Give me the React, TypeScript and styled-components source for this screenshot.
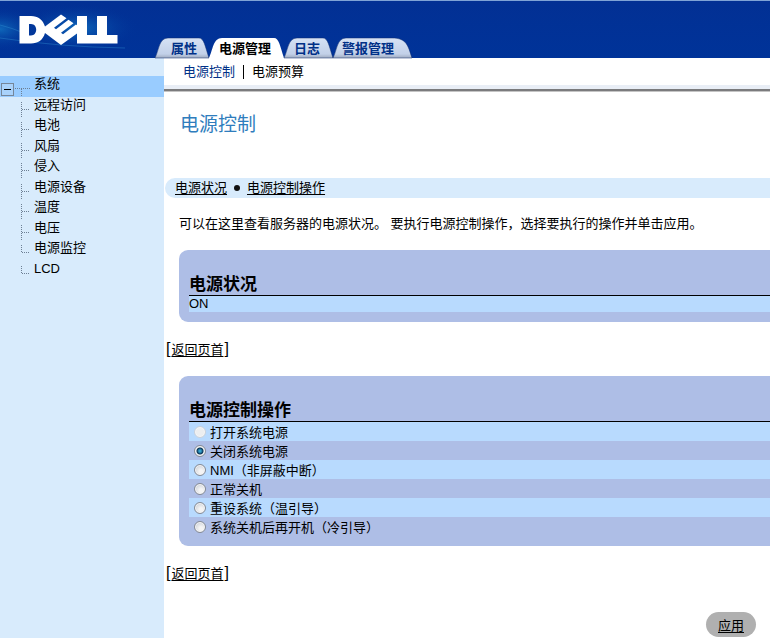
import React from "react";
import styled, { createGlobalStyle } from "styled-components";

const Global = createGlobalStyle`
  * { box-sizing: border-box; }
  body {
    margin: 0;
    background: #fff;
    color: #000;
    font: 13px/20px "Liberation Sans", "Noto Sans CJK SC", sans-serif;
  }
  a { color: inherit; }
`;

const Header = styled.header`
  display: flex;
  height: 58px;
  border-top: 1px solid #7fa3d6;
  background: linear-gradient(#023094, #003399);
`;
const Brand = styled.div`
  flex: none;
  width: 155px;
`;
const Tabs = styled.nav`
  display: flex;
  align-items: flex-end;
`;
const Tab = styled.a<{ $active?: boolean; $width: number; $left: number }>`
  position: relative;
  width: ${(p) => p.$width}px;
  height: 20px;
  padding-left: ${(p) => p.$left}px;
  color: ${(p) => (p.$active ? "#000" : "#003087")};
  font-weight: bold;
  line-height: 22px;
  white-space: nowrap;
  text-decoration: none;
`;
const TabShape = styled.svg`
  position: absolute;
  left: 0;
  top: 0;
  overflow: visible;
`;
const TabText = styled.span`
  position: relative;
`;

const Columns = styled.div`
  display: flex;
  min-height: calc(100vh - 58px);
`;
const Sidebar = styled.aside`
  flex: none;
  width: 164px;
  padding-top: 18px;
  background: #d8ebfc;
`;
const Tree = styled.ul`
  margin: 0;
  padding: 0;
  list-style: none;
`;
const TreeItem = styled.li<{ $selected?: boolean }>`
  display: flex;
  height: 20px;
  background: ${(p) => (p.$selected ? "#99ccff" : "transparent")};
  &:nth-child(odd) { height: 21px; }
`;
const TreeLines = styled.svg`
  flex: none;
  width: 34px;
  height: 21px;
`;
const TreeLink = styled.a`
  line-height: 16px;
  text-decoration: none;
`;

const Main = styled.main`
  flex: 1;
  min-width: 0;
`;
const SubNav = styled.nav`
  display: flex;
  align-items: center;
  height: 33px;
  padding: 0 0 4px 18px;
  border-bottom: 2px solid #7b7b7d;
  box-shadow: inset 0 -4px #e9eef6, 0 1px #c4c4c4;
`;
const SubLink = styled.a<{ $current?: boolean }>`
  padding: 0 8px 0 1px;
  color: ${(p) => (p.$current ? "#003087" : "#000")};
  line-height: 14px;
  text-decoration: none;
  & + & {
    padding-left: 8px;
    border-left: 1px solid #000;
  }
`;
const Title = styled.h1`
  margin: 19px 0 0 16px;
  color: #2f7dbd;
  font-size: 19px;
  font-weight: normal;
  line-height: 30px;
`;
const Anchors = styled.nav`
  display: flex;
  align-items: center;
  gap: 7px;
  height: 20px;
  margin: 38px 0 0 1px;
  padding-left: 10px;
  border-radius: 10px 0 0 10px;
  background: #d8ebfc;
`;
const LineLink = styled.a`
  text-underline-offset: 2px;
`;
const Dot = styled.span`
  width: 6px;
  height: 6px;
  border-radius: 3px;
  background: #111;
`;
const Intro = styled.p`
  margin: 16px 0 16px 15px;
`;
const Panel = styled.section`
  margin-left: 15px;
  padding: 24px 0 10px 10px;
  border-radius: 9px 0 0 9px;
  background: #aebee6;
`;
const PanelTitle = styled.h2`
  margin: 0;
  border-bottom: 1px solid #000;
  font-size: 17px;
  line-height: 21px;
`;
const Status = styled.div`
  background: #b8dafe;
  line-height: 16px;
`;
const Options = styled.div`
  display: flex;
  flex-direction: column;
`;
const Option = styled.label`
  display: flex;
  align-items: center;
  gap: 4px;
  height: 19px;
  padding: 2px 0 0 5px;
  line-height: 19px;
  &:nth-child(odd) { background: #b8dafe; }
`;
const Radio = styled.input`
  appearance: none;
  flex: none;
  width: 12px;
  height: 12px;
  margin: 0 0 2px;
  border: 1px solid #858b96;
  border-radius: 6px;
  background: radial-gradient(circle at 60% 65%, #f4f4f4 20%, #cfd3da 75%);
  box-shadow: inset 0 0 0 1px #f6f6f6;
  &:checked {
    background: radial-gradient(circle, #35a3cf 0 1px, #0b3355 3px, #e3e8ec 4px);
  }
  &:disabled {
    border-color: #c8d1dc;
    background: #eceef0;
  }
`;
const Back = styled.div`
  display: flex;
  gap: 1px;
  margin: 18px 0 16px 2px;
`;
const Bracket = styled.span`
  font-size: 16px;
  line-height: 18px;
`;
const Actions = styled.div`
  display: flex;
  justify-content: flex-end;
  margin-top: 28px;
  padding-right: 14px;
`;
const Apply = styled.button`
  width: 50px;
  height: 25px;
  padding: 2px 0 0;
  border: 0;
  border-radius: 13px;
  background: #b0b0b0;
  color: #000;
  font: inherit;
  text-decoration: underline;
  text-underline-offset: 2px;
`;

const tabs = [
  { label: "属性", width: 54, left: 16 },
  { label: "电源管理", width: 75, left: 10, active: true },
  { label: "日志", width: 49, left: 10 },
  { label: "警报管理", width: 79, left: 9, last: true },
];
const nodes = ["系统", "远程访问", "电池", "风扇", "侵入", "电源设备", "温度", "电压", "电源监控", "LCD"];
const actions = [
  "打开系统电源",
  "关闭系统电源",
  "NMI（非屏蔽中断）",
  "正常关机",
  "重设系统（温引导）",
  "系统关机后再开机（冷引导）",
];

function Logo() {
  return (
    <svg width="155" height="57" viewBox="0 1 155 57" role="img" aria-label="DELL">
      <defs>
        <radialGradient id="glow">
          <stop offset="0" stopColor="#1687cf" stopOpacity=".9" />
          <stop offset="1" stopColor="#003399" stopOpacity="0" />
        </radialGradient>
      </defs>
      <ellipse cx="0" cy="29" rx="42" ry="22" fill="url(#glow)" opacity=".7" />
      <ellipse cx="78" cy="28" rx="60" ry="24" fill="url(#glow)" opacity=".75" />
      <path d="M0 25 Q12 28 24 33 M0 38 Q60 47 125 48" stroke="#3a9ddb" strokeOpacity=".35" fill="none" />
      <path
        fill="#fff"
        fillRule="evenodd"
        d="M19.500 16H31C38 16 43 20 45 26.500L61 14.500L66.500 18.300L54 27.800L56 29.300L68.500 19.800L73.500 23.300L61 32.800L63 34.300L76 24.500L77 25.200V16H87V35H97V16H107V35H117.500V43.500H77V33.500L61 45L45 33C43 40 38 43.500 31 43.500H19.500ZM29 24V35.500H31C38 35.500 38 24 31 24Z"
      />
    </svg>
  );
}

type TabProps = { label: string; width: number; left: number; active?: boolean; last?: boolean };

function TabLink({ label, width: w, left, active, last }: TabProps) {
  const r = last ? 17 : 7;
  const shape = `M0 20C4 12 4 0 13 0H${w - r - 3}C${w - 5} 0 ${w - 4} 8 ${w} 20Z`;
  return (
    <Tab href="#" $width={w} $left={left} $active={active}>
      <TabShape width={w} height="20" aria-hidden="true">
        <defs>
          <linearGradient id="tabFill" x1="0" y1="0" x2="0" y2="1">
            <stop offset="0" stopColor="#d6e2f5" />
            <stop offset=".8" stopColor="#c2d0e8" />
            <stop offset="1" stopColor="#9fabc0" />
          </linearGradient>
        </defs>
        <path d={shape} fill={active ? "#fff" : "url(#tabFill)"} stroke="#0b2a6b" strokeOpacity={active ? 0 : 0.5} />
      </TabShape>
      <TabText>{label}</TabText>
    </Tab>
  );
}

function Lines({ index }: { index: number }) {
  if (index === 0) {
    return (
      <TreeLines aria-hidden="true">
        <rect x="1.5" y="7.500" width="12" height="12" fill="#a9d2fb" stroke="#75869a" />
        <path d="M4 13.500H11" stroke="#000" />
        <path d="M15 12.500H30M21.500 13V21" stroke="#6d7f94" strokeDasharray="1 1" />
      </TreeLines>
    );
  }
  const end = index >= nodes.length - 2 ? 12 : 20;
  return (
    <TreeLines aria-hidden="true">
      <path d={`M21.500 5V${end}M22 12.500H30`} stroke="#6d7f94" strokeDasharray="1 1" fill="none" />
    </TreeLines>
  );
}

function BackToTop() {
  return (
    <Back>
      <Bracket>[</Bracket>
      <LineLink href="#top">返回页首</LineLink>
      <Bracket>]</Bracket>
    </Back>
  );
}

export default function App() {
  return (
    <>
      <Global />
      <Header id="top">
        <Brand><Logo /></Brand>
        <Tabs>{tabs.map((t) => <TabLink key={t.label} {...t} />)}</Tabs>
      </Header>
      <Columns>
        <Sidebar>
          <Tree>
            {nodes.map((n, i) => (
              <TreeItem key={n} $selected={i === 0}>
                <Lines index={i} />
                <TreeLink href="#">{n}</TreeLink>
              </TreeItem>
            ))}
          </Tree>
        </Sidebar>
        <Main>
          <SubNav>
            <SubLink href="#" $current>电源控制</SubLink>
            <SubLink href="#">电源预算</SubLink>
          </SubNav>
          <Title>电源控制</Title>
          <Anchors>
            <LineLink href="#status">电源状况</LineLink>
            <Dot />
            <LineLink href="#control">电源控制操作</LineLink>
          </Anchors>
          <Intro>可以在这里查看服务器的电源状况。 要执行电源控制操作，选择要执行的操作并单击应用。</Intro>
          <Panel id="status">
            <PanelTitle>电源状况</PanelTitle>
            <Status>ON</Status>
          </Panel>
          <BackToTop />
          <Panel id="control">
            <PanelTitle>电源控制操作</PanelTitle>
            <Options role="radiogroup" aria-label="电源控制操作">
              {actions.map((a, i) => (
                <Option key={a}>
                  <Radio type="radio" name="power" disabled={i === 0} defaultChecked={i === 1} />
                  {a}
                </Option>
              ))}
            </Options>
          </Panel>
          <BackToTop />
          <Actions><Apply type="button">应用</Apply></Actions>
        </Main>
      </Columns>
    </>
  );
}
